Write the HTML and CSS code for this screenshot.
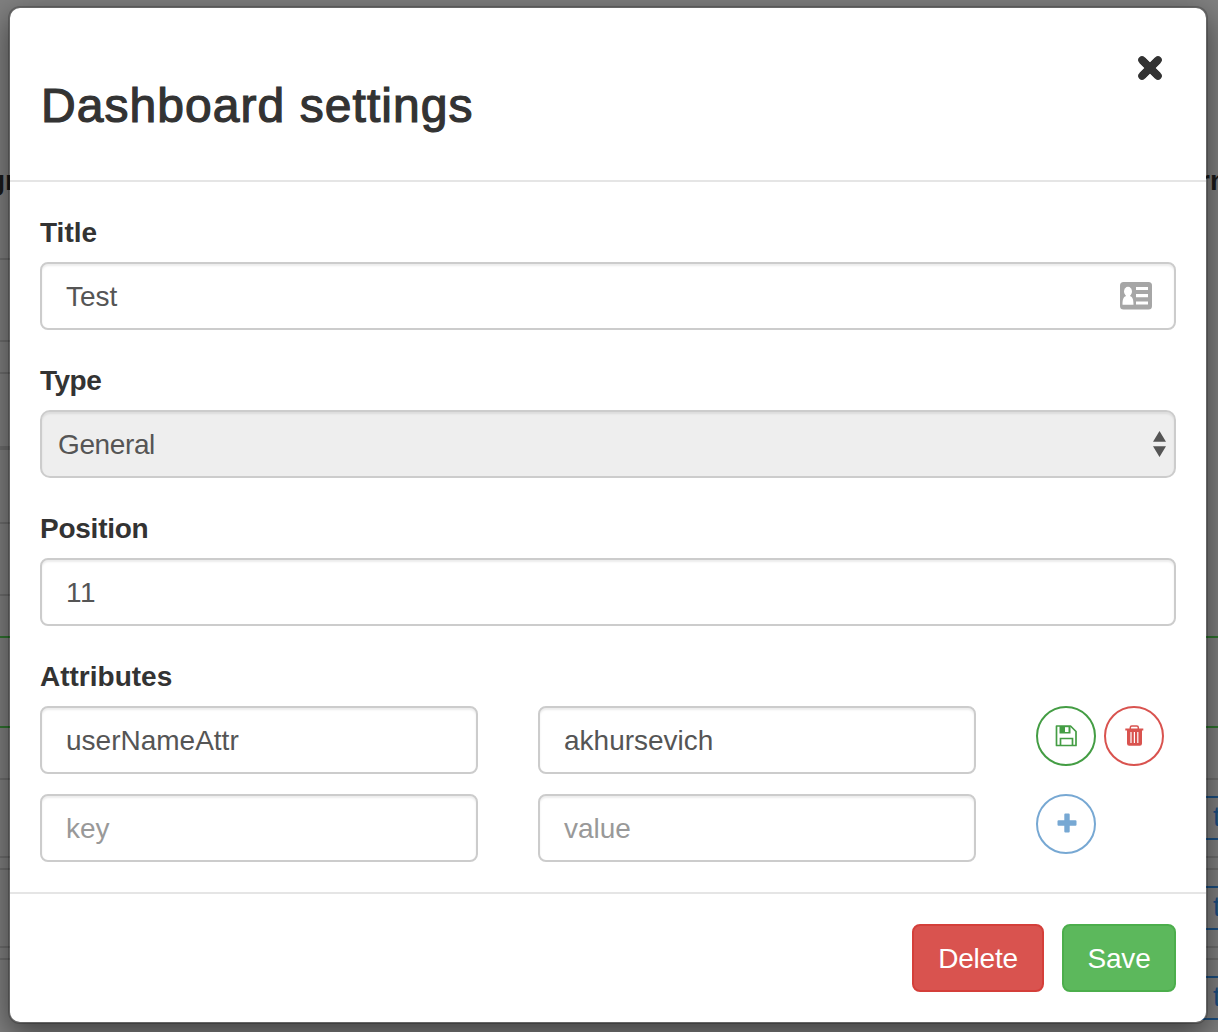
FILE: index.html
```html
<!DOCTYPE html>
<html lang="en">
<head>
<meta charset="utf-8">
<title>Dashboard settings</title>
<link rel="stylesheet" href="styles.css">
</head>
<body>
<svg class="page-behind" width="1218" height="1032" viewBox="0 0 1218 1032" aria-hidden="true">
  <g fill="#6e6e6e">
    <path d="M0 258h20v2H0zM0 340h20v2H0zM0 372h20v2H0zM0 446h20v4H0zM0 522h20v2H0zM0 594h20v2H0z"/>
    <path d="M0 778h1218v2H0zM0 856h1218v2H0zM0 868h1218v2H0zM0 946h1218v2H0zM0 958h1218v2H0z"/>
  </g>
  <path fill="#2f742f" d="M0 636h1218v2H0zM0 726h1218v2H0z"/>
  <path fill="#1c4f80" d="M1190 796h28v2h-28zM1190 838h28v2h-28zM1190 886h28v2h-28zM1190 928h28v2h-28zM1190 976h28v2h-28zM1190 1018h28v2h-28z"/>
  <g class="heading-text"><text x="-12" y="190">gr</text><text x="1199" y="190">rn</text></g>
  <g class="tag-text"><text x="1213" y="826">t</text><text x="1213" y="916">t</text><text x="1213" y="1006">t</text></g>
</svg>
<main class="modal">
  <header class="modal-header">
    <h2 class="modal-title">Dashboard settings</h2>
    <button class="close" aria-label="Close">
      <svg width="26" height="26" viewBox="0 0 26 26"><path d="M5 5l16 16M21 5L5 21" stroke="#333" stroke-width="7.600" stroke-linecap="round"/><path d="M5.200 5.200l15.600 15.600M20.800 5.200L5.200 20.800" stroke="#333" stroke-width="7.600"/></svg>
    </button>
  </header>
  <form class="modal-body">
    <div class="group">
      <label class="label">Title</label>
      <div class="control"><span>Test</span>
        <svg class="card-icon" width="32" height="28" viewBox="0 0 32 28"><rect width="32" height="27.500" rx="3.500" fill="#a6a6a6"/><g fill="#fff"><ellipse cx="8" cy="9.500" rx="4" ry="4.700"/><path d="M5.800 12h4.400v2.300c2.300.6 3.300 3 3.300 8.400h-11c0-5.400 1-7.800 3.300-8.400zM16 5h12v3H16zM16 12h12v3.200H16zM16 19.500h12v3H16z"/></g></svg>
      </div>
    </div>
    <div class="group">
      <label class="label type-label">Type</label>
      <div class="control select"><span>General</span>
        <svg class="arrows" width="13" height="26" viewBox="0 0 13 26"><path fill="#555" d="M6.500 0L13 10.700H0zM6.500 26L13 15.300H0z"/></svg>
      </div>
    </div>
    <div class="group">
      <label class="label position-label">Position</label>
      <div class="control"><span class="number">11</span></div>
    </div>
    <div class="group">
      <label class="label">Attributes</label>
      <div class="attributes">
        <div class="control"><span>userNameAttr</span></div>
        <div class="control"><span>akhursevich</span></div>
        <div class="actions">
          <button class="round green" type="button" aria-label="Save attribute"><svg width="22" height="22" viewBox="0 0 22 22"><path d="M1.500 1h14L21 6.500v14H1.500z" fill="none" stroke="currentColor" stroke-width="1.700" stroke-linejoin="round"/><path d="M4.500 1h11v7.500h-11z" fill="currentColor"/><path d="M10 2.200h3.500V7H10z" fill="#fff"/><path d="M5.500 20.500v-7h12v7" fill="none" stroke="currentColor" stroke-width="1.700"/></svg></button>
          <button class="round red" type="button" aria-label="Delete attribute"><svg width="20" height="22" viewBox="0 0 20 22"><path d="M6.300 4V2.500Q6.300 1 7.800 1h5Q14.300 1 14.300 2.500V4" fill="none" stroke="currentColor" stroke-width="1.500"/><path d="M1.300 3.500h18v2h-18zM3 5h15v13.500q0 2.200-2.200 2.200H5.200Q3 20.700 3 18.500z" fill="currentColor"/><path d="M7 7v11M10.400 7v11M13.800 7v11" stroke="#fff" stroke-width="1.200"/></svg></button>
        </div>
        <div class="control"><span class="placeholder">key</span></div>
        <div class="control"><span class="placeholder">value</span></div>
        <div class="actions">
          <button class="round blue" type="button" aria-label="Add attribute"><svg class="plus" width="20" height="20" viewBox="0 0 20 20"><path fill="currentColor" d="M8.300.5h3.400q1 0 1 1v5.800h5.800q1 0 1 1v3.400q0 1-1 1h-5.800v5.800q0 1-1 1H8.300q-1 0-1-1v-5.800H1.500q-1 0-1-1V8.300q0-1 1-1h5.800V1.500q0-1 1-1z"/></svg></button>
        </div>
      </div>
    </div>
  </form>
  <footer class="modal-footer">
    <button class="btn danger">Delete</button>
    <button class="btn success">Save</button>
  </footer>
</main>
</body>
</html>
```

FILE: styles.css
```css
* { box-sizing: border-box; }
body { margin: 0; width: 1218px; height: 1032px; overflow: hidden; background: #808080; font: 28px/40px "Liberation Sans", Arial, sans-serif; color: #333; }
button { font: inherit; padding: 0; background: none; border: 0; }
svg { display: block; flex: none; }
.page-behind { position: absolute; left: 0; top: 0; }
.heading-text { font-weight: bold; fill: #1a1a1a; }
.tag-text { fill: #1c4f80; }

.modal { position: relative; width: 1200px; height: 1018px; margin: 6px 0 0 8px; border: 2px solid rgba(0, 0, 0, .2); border-radius: 12px; background: #fff; background-clip: padding-box; box-shadow: 0 10px 30px rgba(0, 0, 0, .5); display: flex; flex-direction: column; }
.modal-header { height: 174px; border-bottom: 2px solid #e5e5e5; display: flex; justify-content: space-between; align-items: flex-start; padding: 47px 43px 0 30px; }
.modal-title { margin: 24px 0 0 1px; font-size: 48px; line-height: 53px; font-weight: normal; letter-spacing: 1.06px; -webkit-text-stroke: 1.2px #333; white-space: nowrap; }
.close svg { overflow: visible; }

.modal-body { padding: 30px; display: flex; flex-direction: column; gap: 30px; }
.group { display: flex; flex-direction: column; gap: 10px; }
.label { height: 40px; padding-top: 1px; font-weight: bold; align-self: flex-start; }
.type-label { letter-spacing: -.5px; }
.position-label { letter-spacing: -.25px; }
.control { height: 68px; display: flex; align-items: center; justify-content: space-between; padding: 0 22px 0 24px; border: 2px solid #ccc; border-radius: 8px; background: #fff; box-shadow: inset 0 2px 2px rgba(0, 0, 0, .075); color: #555; }
.control span { padding-top: 2px; white-space: nowrap; }
.control .number { letter-spacing: .4px; }
.select { background: #eee; padding: 0 8px 0 16px; border-radius: 10px; letter-spacing: -.38px; }
.control .placeholder { color: #999; }
.attributes { display: grid; grid-template-columns: 438px 438px 1fr; column-gap: 60px; row-gap: 20px; }
.actions { display: flex; gap: 8px; }
.round { width: 60px; height: 60px; border: 2px solid currentColor; border-radius: 50%; display: flex; align-items: center; justify-content: center; }
.green { color: #449d44; }
.red { color: #d9534f; }
.blue { color: #77a8d3; }
.plus { margin: 0 0 2px 1px; }

.modal-footer { border-top: 2px solid #e5e5e5; padding: 30px; display: flex; justify-content: flex-end; gap: 18px; }
.btn { height: 68px; padding-top: 2px; border: 2px solid; border-radius: 8px; color: #fff; letter-spacing: -.2px; }
.danger { width: 132px; background: #d9534f; border-color: #d43f3a; }
.success { width: 114px; background: #5cb85c; border-color: #4cae4c; }
```
